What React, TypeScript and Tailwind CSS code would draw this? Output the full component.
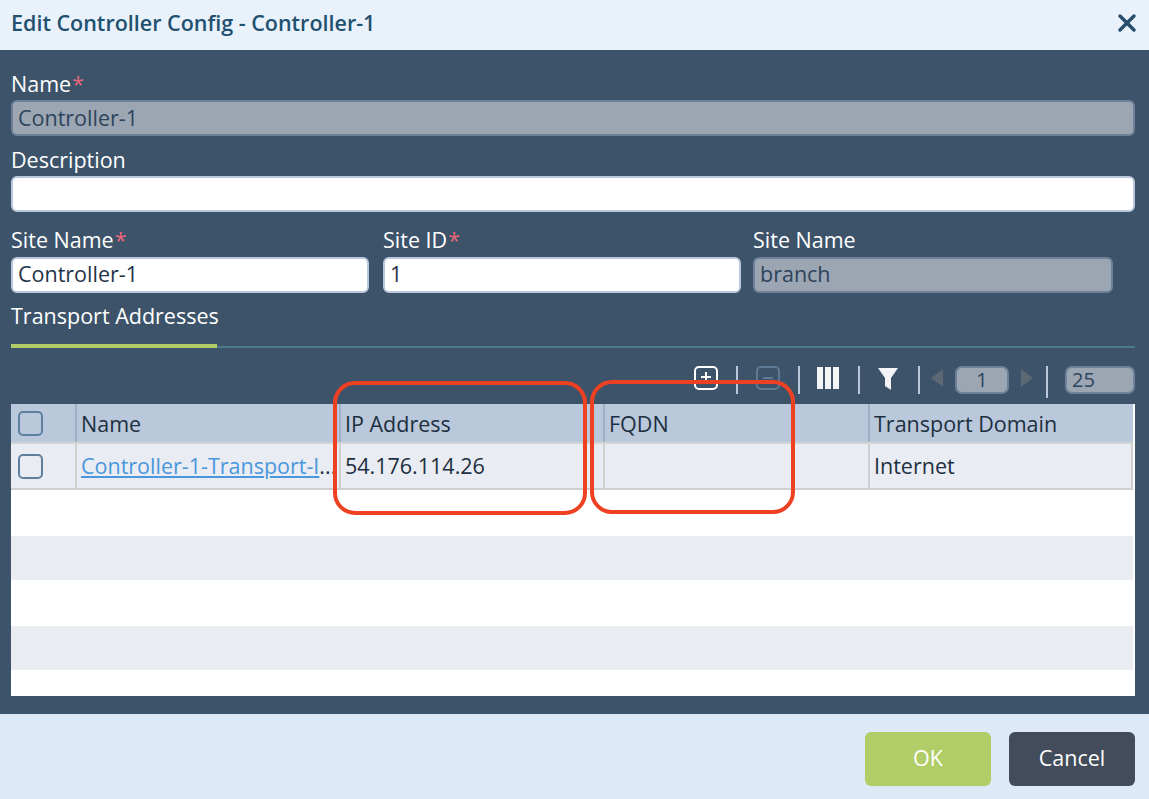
import React from 'react';
import { X } from 'lucide-react';

const inputBase = 'h-[36px] rounded-[6px] border-2 px-[5px] text-[21.5px] leading-[32px] flex items-center';
const editable = `${inputBase} bg-white border-[#b9c8da] text-[#1f3347]`;
const disabled = `${inputBase} bg-[#9ca6b3] border-[#6d8299] text-[#2c445c]`;

const Label = ({ text, required, className = '' }: { text: string; required?: boolean; className?: string }) => (
  <div className={`text-[21.5px] leading-[28px] text-white ${className}`}>
    {text}
    {required && <span className="text-[#e8677a] ml-[1px]">*</span>}
  </div>
);

const Checkbox = () => (
  <div className="w-[25px] h-[25px] rounded-[5px] border-2 border-[#5f7f9f]" />
);

const Sep = ({ tall }: { tall?: boolean }) => (
  <div className={`w-[2px] bg-[#b9c8da] ${tall ? 'h-[32px]' : 'h-[28px]'}`} />
);

const COLS = 'grid grid-cols-[64px_264px_264px_265px_265px] w-[1122px]';

const BLANK_ROWS = [
  'h-[46px] bg-white',
  'h-[44px] bg-[#e9ecf0]',
  'h-[46px] bg-white',
  'h-[44px] bg-[#e9ecf0]',
  'h-[26px] bg-white',
];

export default function App() {
  return (
    <div className="relative w-[1149px] h-[799px] overflow-hidden flex flex-col font-['Open_Sans','Noto_Sans',sans-serif]">
      <div className="h-[50px] shrink-0 bg-[#e9f2fb] flex items-center justify-between pl-[11px] pr-[8px] pb-[4px]">
        <div className="text-[21.5px] font-semibold text-[#22506f]">Edit Controller Config - Controller-1</div>
        <X size={28} strokeWidth={3} className="text-[#2a4f6e]" />
      </div>

      <div className="h-[664px] shrink-0 bg-[#3c536a] pl-[11px] pr-[14px] pt-[20px]">
        <Label text="Name" required />
        <div className={`${disabled} mt-[2px]`}>Controller-1</div>
        <Label text="Description" className="mt-[10px]" />
        <div className={`${editable} mt-[2px]`} />

        <div className="flex mt-[14px]">
          <div className="w-[358px] mr-[14px]">
            <Label text="Site Name" required />
            <div className={`${editable} mt-[3px] pb-[2px]`}>Controller-1</div>
          </div>
          <div className="w-[358px] mr-[12px]">
            <Label text="Site ID" required />
            <div className={`${editable} mt-[3px] pb-[2px]`}>1</div>
          </div>
          <div className="w-[360px]">
            <Label text="Site Name" />
            <div className={`${disabled} mt-[3px] pb-[2px]`}>branch</div>
          </div>
        </div>

        <div className="mt-[10px] border-b-2 border-[#4d7a8a] h-[45px]">
          <div className="w-[206px] h-[45px] border-b-4 border-[#b0cd68] text-[21.5px] leading-[26px] whitespace-nowrap text-white">Transport Addresses</div>
        </div>

        <div className="h-[56px] pt-[18px] flex items-start justify-end">
          <svg width="24" height="24" viewBox="0 0 24 24" className="mr-[18px]">
            <rect x="1" y="1" width="22" height="22" rx="4" fill="none" stroke="white" strokeWidth="2" />
            <path d="M12 6v10M7 11h10" stroke="white" strokeWidth="2" />
          </svg>
          <Sep />
          <svg width="24" height="24" viewBox="0 0 24 24" className="mx-[18px]">
            <rect x="1" y="1" width="22" height="22" rx="4" fill="none" stroke="#5f7a94" strokeWidth="2" />
            <path d="M7 12h10" stroke="#5f7a94" strokeWidth="2" />
          </svg>
          <Sep />
          <div className="flex gap-[2px] ml-[17px] mr-[19px] mt-[1px]">
            <div className="w-[6px] h-[22px] bg-[#f2f4f6]" />
            <div className="w-[6px] h-[22px] bg-[#f2f4f6]" />
            <div className="w-[6px] h-[22px] bg-[#f2f4f6]" />
          </div>
          <Sep />
          <svg width="20" height="22" viewBox="0 0 20 22" className="ml-[18px] mr-[20px] mt-[2px]">
            <path d="M0 0h20l-7 10v12l-6-4V10z" fill="#f2f4f6" />
          </svg>
          <Sep />
          <svg width="12" height="18" viewBox="0 0 12 18" className="ml-[11px] mr-[12px] mt-[3px]">
            <path d="M12 0v18L0 9z" fill="#5c6874" />
          </svg>
          <div className="w-[54px] h-[28px] rounded-[7px] border-2 border-[#6d8299] bg-[#9ca6b3] text-[20px] text-[#2c445c] flex items-center justify-center">1</div>
          <svg width="12" height="18" viewBox="0 0 12 18" className="mx-[12px] mt-[3px]">
            <path d="M0 0v18L12 9z" fill="#5c6874" />
          </svg>
          <div className="ml-[1px]"><Sep tall /></div>
          <div className="ml-[17px] w-[70px] h-[28px] rounded-[7px] border-2 border-[#6d8299] bg-[#9ca6b3] text-[20px] text-[#2c445c] flex items-center pl-[5px]">25</div>
        </div>

        <div className="h-[292px] bg-white">
          <div className={`${COLS} h-[40px] bg-[#b9c8da] text-[21.5px] text-[#1d2f40] border-b-2 border-[#d3d3d3]`}>
            <div className="flex items-center pl-[7px]"><Checkbox /></div>
            {['Name', 'IP Address', 'FQDN', 'Transport Domain'].map((h) => (
              <div key={h} className="flex items-center pl-[4px] pt-[2px] border-l-2 border-[#9fb0c4]">{h}</div>
            ))}
          </div>
          <div className={`${COLS} h-[46px] bg-[#e9ecf2] text-[21.5px] text-[#1d2f40] border-b-2 border-[#cfcfcf]`}>
            <div className="flex items-center pl-[7px]"><Checkbox /></div>
            <div className="flex items-center pl-[4px] border-l-2 border-[#cfcfcf] whitespace-nowrap overflow-hidden">
              <span className="text-[#4a97dc] underline">Controller-1-Transport-I</span>
              <span>...</span>
            </div>
            <div className="flex items-center pl-[4px] border-l-2 border-[#cfcfcf]">54.176.114.26</div>
            <div className="border-l-2 border-[#cfcfcf]" />
            <div className="flex items-center pl-[4px] border-x-2 border-[#cfcfcf]">Internet</div>
          </div>
          {BLANK_ROWS.map((row, i) => (
            <div key={i} className={`${row} w-[1122px]`} />
          ))}
        </div>
      </div>

      <div className="flex-1 bg-[#dde9f6] flex items-start justify-end gap-[18px] pr-[14px] pt-[18px]">
        <div className="w-[126px] h-[54px] rounded-[6px] bg-[#b0cd68] text-white text-[21.5px] pb-[2px] flex items-center justify-center">OK</div>
        <div className="w-[126px] h-[54px] rounded-[6px] bg-[#424c5b] text-white text-[21.5px] pb-[2px] flex items-center justify-center">Cancel</div>
      </div>

      {/* red callouts drawn over the table */}
      <div className="absolute left-[333px] top-[381px] w-[254px] h-[134px] rounded-[22px] border-[4px] border-[#ee4023]" />
      <div className="absolute left-[590px] top-[380px] w-[205px] h-[134px] rounded-[22px] border-[4px] border-[#ee4023]" />
    </div>
  );
}
